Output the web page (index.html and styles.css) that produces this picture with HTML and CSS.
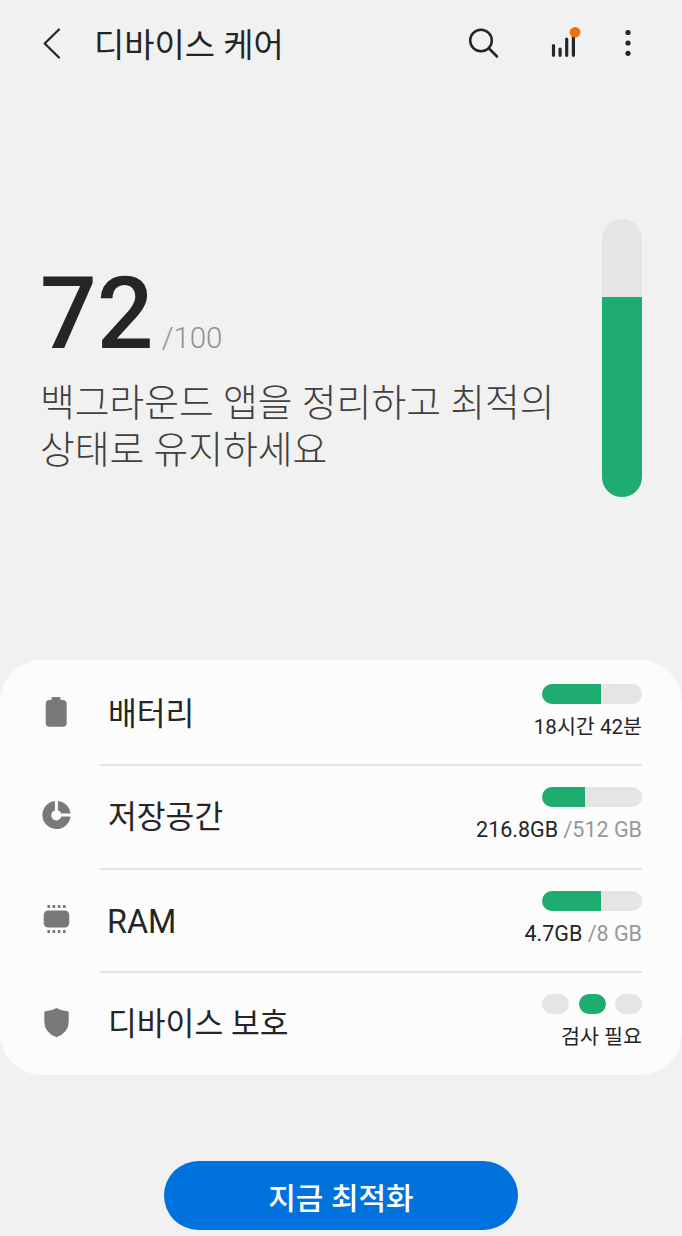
FILE: index.html
```html
<!DOCTYPE html>
<html lang="ko">
<head>
    <meta charset="UTF-8">
    <meta name="viewport" content="width=device-width, initial-scale=1.0">
    <title>디바이스 케어</title>
    <link rel="stylesheet" href="styles.css">
</head>
<body>
    <header class="app-bar">
        <svg class="back-icon" width="20" height="32" viewBox="0 0 20 32"><path d="M18 2.500L3.700 16.500L18 30.500" /></svg>
        <h1 class="title">디바이스 케어</h1>
        <svg class="search-icon" width="32" height="32" viewBox="0 0 32 32"><circle cx="14" cy="13.500" r="10.800" /><path d="M22 21.500L30 29.500" /></svg>
        <svg class="report-icon" width="32" height="34" viewBox="0 0 32 34">
            <path d="M3.500 19.500V29.300M10.100 23V29.300M16.700 13V29.300M23.400 10V29.300" />
            <circle cx="25" cy="6.300" r="5.300" />
        </svg>
        <svg class="more-icon" width="8" height="28" viewBox="0 0 8 28"><circle cx="4" cy="3.500" r="2.600" /><circle cx="4" cy="14" r="2.600" /><circle cx="4" cy="24.300" r="2.600" /></svg>
    </header>

    <section class="summary">
        <div class="summary-text">
            <div class="score"><span class="score-value">72</span><span class="score-total">/100</span></div>
            <p class="message">백그라운드 앱을 정리하고 최적의<br>상태로 유지하세요</p>
        </div>
        <div class="score-bar"><div class="score-fill" style="height: 72%"></div></div>
    </section>

    <section class="card">
        <div class="row">
            <svg class="row-icon" width="32" height="32" viewBox="0 0 32 32"><path d="M11.500 4V2.300Q11.500 1 12.800 1H19.200Q20.500 1 20.500 2.300V4H22.500Q26.700 4 26.700 8V27Q26.700 30.700 23 30.700H9.300Q5.700 30.700 5.700 27V8Q5.700 4 9.500 4Z" /></svg>
            <div class="row-body">
                <span class="label">배터리</span>
                <div class="status">
                    <div class="bar"><div class="bar-fill" style="width: 59%"></div></div>
                    <span class="value value-ko">18시간 42분</span>
                </div>
            </div>
        </div>
        <div class="row">
            <svg class="row-icon" width="32" height="32" viewBox="0 0 32 32"><path d="M14.900 1.900A14.100 14.100 0 1 0 30.500 17.600H21.300A5.100 5.100 0 1 1 14.900 11.400Z" /><path d="M17.900 1.900A14.100 14.100 0 0 1 30.500 14.600H21.200A5.200 5.200 0 0 0 17.900 11.300Z" /></svg>
            <div class="row-body">
                <span class="label">저장공간</span>
                <div class="status">
                    <div class="bar"><div class="bar-fill" style="width: 43%"></div></div>
                    <span class="value">216.8GB <span class="total">/512 GB</span></span>
                </div>
            </div>
        </div>
        <div class="row">
            <svg class="row-icon" width="32" height="32" viewBox="0 0 32 32"><rect x="3.700" y="7.500" width="25.500" height="17" rx="4.500" /><path class="pins" d="M8.700 2V5M13.900 2V5M19.100 2V5M24.300 2V5M8.700 27V30M13.900 27V30M19.100 27V30M24.300 27V30" /></svg>
            <div class="row-body">
                <span class="label label-latin">RAM</span>
                <div class="status">
                    <div class="bar"><div class="bar-fill" style="width: 58.500%"></div></div>
                    <span class="value">4.7GB <span class="total">/8 GB</span></span>
                </div>
            </div>
        </div>
        <div class="row">
            <svg class="row-icon" width="32" height="32" viewBox="0 0 32 32"><path d="M16.500 2Q21 4.900 27.500 5.200Q28.700 5.300 28.700 6.500V15.500Q28.700 26.500 16.500 31.300Q4.300 26.500 4.300 15.500V6.500Q4.300 5.300 5.500 5.200Q12 4.900 16.500 2Z" /></svg>
            <div class="row-body">
                <span class="label">디바이스 보호</span>
                <div class="status">
                    <div class="steps"><i class="step"></i><i class="step active"></i><i class="step"></i></div>
                    <span class="value value-ko">검사 필요</span>
                </div>
            </div>
        </div>
    </section>

    <button class="optimize-button">지금 최적화</button>
</body>
</html>
```
FILE: styles.css
```css
* {
    box-sizing: border-box;
}
body {
    margin: 0;
    height: 1236px;
    overflow: hidden;
    background-color: #f1f1f1;
    color: #252525;
    font-family: Roboto, "Noto Sans CJK KR", sans-serif;
}
svg {
    display: block;
    flex: none;
}

/* top bar */
.app-bar {
    display: flex;
    align-items: center;
    height: 86px;
    padding: 0 50px 0 41px;
    fill: none;
    stroke: #252525;
}
.back-icon {
    stroke-width: 2.2;
    stroke-linecap: round;
    stroke-linejoin: round;
}
.title {
    flex: 1;
    margin: 0 0 0 33px;
    padding-top: 5px;
    font-size: 32.9px;
    line-height: 48px;
    font-weight: 400;
    white-space: nowrap;
}
.search-icon {
    margin-right: 51px;
    stroke-width: 2.5;
    stroke-linecap: round;
}
.report-icon {
    margin-right: 42px;
    stroke-width: 3.2;
    stroke-linecap: round;
}
.report-icon circle {
    fill: #ed700d;
    stroke: none;
}
.more-icon {
    fill: #252525;
    stroke: none;
}

/* score */
.summary {
    display: flex;
    justify-content: space-between;
    height: 574px;
    padding: 133px 40px 0 40px;
}
.summary-text {
    padding-top: 36px;
}
.score {
    display: flex;
    align-items: baseline;
    height: 125px;
    line-height: 118px;
}
.score-value {
    font-size: 100px;
    font-weight: 500;
}
.score-total {
    margin-left: 8px;
    font-size: 29.5px;
    font-weight: 300;
    color: #929292;
}
.message {
    margin: 0;
    font-size: 37.8px;
    line-height: 47px;
    font-weight: 300;
    color: #404040;
    white-space: nowrap;
}
.score-bar {
    display: flex;
    align-items: flex-end;
    width: 40px;
    height: 278px;
    border-radius: 20px;
    background-color: #e5e5e5;
    overflow: hidden;
}
.score-fill {
    width: 100%;
    background-color: #1fac71;
}

/* device status list */
.card {
    height: 415px;
    padding: 3px 40px 0 40px;
    border-radius: 42px;
    background-color: #fcfcfc;
}
.row {
    display: flex;
    height: 103.4px;
}
.row-icon {
    margin: 33px 28px 0 0;
    fill: #797979;
}
.pins {
    stroke: #797979;
    stroke-width: 2.6;
}
.row-body {
    display: flex;
    flex: 1;
    justify-content: space-between;
    padding-left: 8px;
    border-bottom: 2px solid #e4e4e4;
}
.row:last-child .row-body {
    border-bottom: none;
}
.label {
    padding-top: 28px;
    font-size: 31.3px;
    line-height: 48px;
}
.label-latin {
    margin-left: -1px;
    font-size: 32.4px;
}
.status {
    display: flex;
    flex-direction: column;
    align-items: flex-end;
    padding-top: 21px;
}
.bar {
    width: 100px;
    height: 20px;
    border-radius: 10px;
    background-color: #e5e5e5;
    overflow: hidden;
}
.bar-fill {
    height: 100%;
    background-color: #1fac71;
}
.value {
    margin-top: 9px;
    font-size: 21.5px;
    line-height: 28px;
}
.value-ko {
    font-size: 20.6px;
}
.total {
    color: #979797;
}
.steps {
    display: flex;
    justify-content: space-between;
    width: 100px;
}
.step {
    width: 27px;
    height: 20px;
    border-radius: 10px;
    background-color: #e5e5e5;
}
.step.active {
    background-color: #1fac71;
}

.optimize-button {
    display: block;
    width: 354px;
    height: 69px;
    margin: 86px auto 0;
    padding: 0;
    border: none;
    border-radius: 35px;
    background-color: #0072de;
    color: #fff;
    font-family: inherit;
    font-size: 30px;
    font-weight: 500;
}
```
